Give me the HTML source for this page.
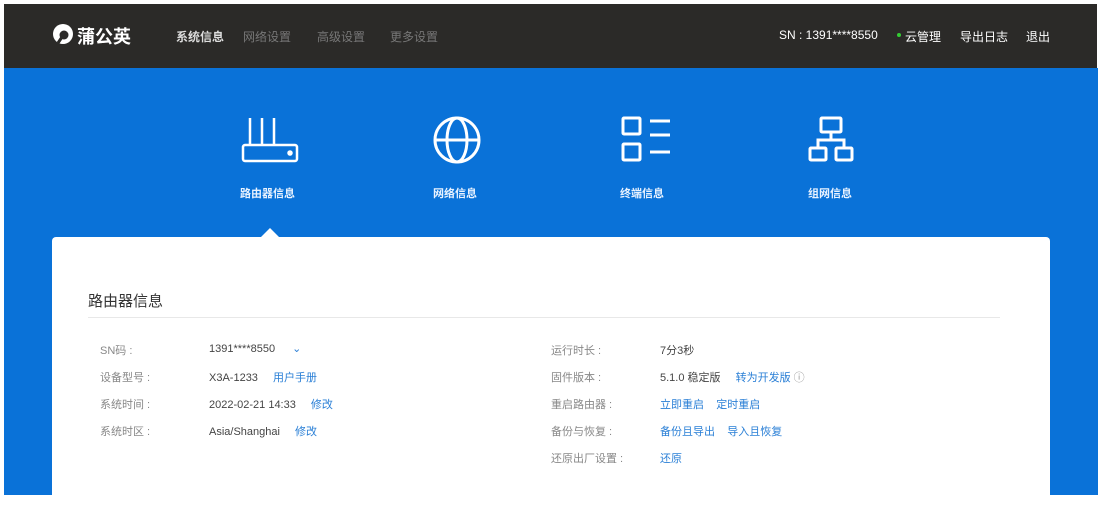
<!DOCTYPE html>
<html><head><meta charset="utf-8"><style>
body{margin:0;width:1104px;height:500px;background:#fff;position:relative;overflow:hidden;font-family:"Liberation Sans","Noto Sans CJK SC",sans-serif}
.hd{position:absolute;left:4px;top:4px;width:1093px;height:64px;background:#2b2a28}
.bl{position:absolute;left:4px;top:68px;width:1094px;height:427px;background:#0a72d8}
.t{position:absolute;white-space:nowrap}
.nav{font-size:12px;color:#777;top:28px}
.card{position:absolute;left:52px;top:237px;width:998px;height:270px;background:#fff;border-radius:4px}
.lab{font-size:11px;color:#888}
.val{font-size:11px;color:#444}
.lnk{font-size:11px;color:#2a7fd6}
.ic{position:absolute;top:115px}
.il{font-size:11px;color:#e8f2ff;font-weight:bold;top:185px}
</style></head><body>
<div class="hd"></div>
<div class="bl"></div>
<svg style="position:absolute;left:52px;top:23px" width="22" height="22"><circle cx="11" cy="11" r="10" fill="#fff"/><circle cx="12" cy="12" r="4.5" fill="#2b2a28"/><path d="M6 20 L10 14" stroke="#2b2a28" stroke-width="3"/></svg>
<div class="t" style="left:77px;top:23px;font-size:18px;color:#fff;font-weight:bold">蒲公英</div>
<div class="t nav" style="left:176px;color:#ddd;font-weight:bold">系统信息</div>
<div class="t nav" style="left:243px">网络设置</div>
<div class="t nav" style="left:317px">高级设置</div>
<div class="t nav" style="left:390px">更多设置</div>
<div class="t" style="left:779px;top:28px;font-size:12px;color:#fff">SN : 1391****8550</div>
<div class="t" style="left:897px;top:33px;width:4px;height:4px;border-radius:2px;background:#3c3"></div>
<div class="t" style="left:905px;top:28px;font-size:12px;color:#fff">云管理</div>
<div class="t" style="left:960px;top:28px;font-size:12px;color:#fff">导出日志</div>
<div class="t" style="left:1026px;top:28px;font-size:12px;color:#fff">退出</div>

<svg class="ic" style="left:240px" width="60" height="50" fill="none" stroke="#fff" stroke-width="2.5"><path d="M10 3V30M22 3V30M34 3V30"/><rect x="3" y="30" width="54" height="16" rx="2"/><circle cx="50" cy="38" r="1.5" fill="#fff"/></svg>
<svg class="ic" style="left:432px" width="50" height="50" fill="none" stroke="#fff" stroke-width="3"><circle cx="25" cy="25" r="22"/><ellipse cx="25" cy="25" rx="10" ry="22"/><path d="M3 25H47"/></svg>
<svg class="ic" style="left:620px" width="54" height="50" fill="none" stroke="#fff" stroke-width="3"><rect x="3" y="3" width="17" height="16" rx="1"/><rect x="3" y="29" width="17" height="16" rx="1"/><path d="M30 6H50M30 20H50M30 37H50"/></svg>
<svg class="ic" style="left:807px" width="50" height="50" fill="none" stroke="#fff" stroke-width="3"><rect x="14" y="3" width="20" height="14" rx="1"/><rect x="3" y="33" width="16" height="12" rx="1"/><rect x="29" y="33" width="16" height="12" rx="1"/><path d="M24 17V25M11 33V25H37V33"/></svg>
<div class="t il" style="left:240px">路由器信息</div>
<div class="t il" style="left:433px">网络信息</div>
<div class="t il" style="left:620px">终端信息</div>
<div class="t il" style="left:808px">组网信息</div>
<div style="position:absolute;left:260px;top:228px;width:0;height:0;border-left:10px solid transparent;border-right:10px solid transparent;border-bottom:10px solid #fff"></div>

<div class="card"></div>
<div class="t" style="left:88px;top:290px;font-size:15px;color:#333">路由器信息</div>
<div style="position:absolute;left:88px;top:317px;width:912px;height:1px;background:#e8e8e8"></div>
<div class="t lab" style="left:100px;top:342px">SN码 :</div>
<div class="t val" style="left:209px;top:342px">1391****8550 <span class="lnk" style="margin-left:14px">⌄</span></div>
<div class="t lab" style="left:100px;top:369px">设备型号 :</div>
<div class="t val" style="left:209px;top:369px">X3A-1233 <span class="lnk" style="margin-left:12px">用户手册</span></div>
<div class="t lab" style="left:100px;top:396px">系统时间 :</div>
<div class="t val" style="left:209px;top:396px">2022-02-21 14:33 <span class="lnk" style="margin-left:12px">修改</span></div>
<div class="t lab" style="left:100px;top:423px">系统时区 :</div>
<div class="t val" style="left:209px;top:423px">Asia/Shanghai <span class="lnk" style="margin-left:12px">修改</span></div>
<div class="t lab" style="left:551px;top:342px">运行时长 :</div>
<div class="t val" style="left:660px;top:342px">7分3秒</div>
<div class="t lab" style="left:551px;top:369px">固件版本 :</div>
<div class="t val" style="left:660px;top:369px">5.1.0 稳定版 <span class="lnk" style="margin-left:12px">转为开发版</span> <span style="color:#999">ⓘ</span></div>
<div class="t lab" style="left:551px;top:396px">重启路由器 :</div>
<div class="t lnk" style="left:660px;top:396px">立即重启 &nbsp;&nbsp;&nbsp;定时重启</div>
<div class="t lab" style="left:551px;top:423px">备份与恢复 :</div>
<div class="t lnk" style="left:660px;top:423px">备份且导出 &nbsp;&nbsp;&nbsp;导入且恢复</div>
<div class="t lab" style="left:551px;top:450px">还原出厂设置 :</div>
<div class="t lnk" style="left:660px;top:450px">还原</div>
<div style="position:absolute;left:0;top:495px;width:1104px;height:5px;background:#fff"></div>
</body></html>
